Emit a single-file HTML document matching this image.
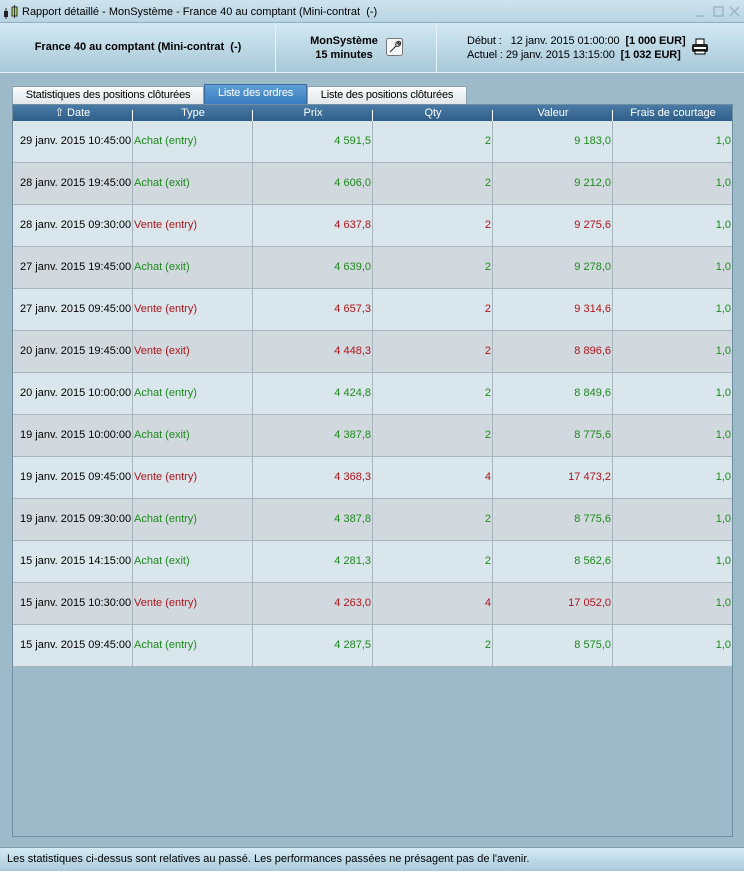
<!DOCTYPE html>
<html><head><meta charset="utf-8"><style>
*{margin:0;padding:0;box-sizing:border-box}
body{width:744px;height:875px;overflow:hidden;background:#9dbac8;font-family:"Liberation Sans",Arial,sans-serif;font-size:11px;color:#000;position:relative}
.abs{position:absolute}
#title{left:0;top:0;width:744px;height:22px;background:linear-gradient(#cfe3ee,#b9d4e2);font-size:11px;line-height:24px;padding-left:22px;white-space:nowrap}
#hdr{left:0;top:22px;width:744px;height:51px;background:linear-gradient(#d3e9f4,#a8c8d7);border-top:1px solid #8fb0c0;border-bottom:1px solid #e4f0f6}
.div{top:0;width:1px;height:50px;background:#8fb0c0;border-right:1px solid #e6f2f8}
.tab{top:86px;height:18px;border:1px solid #8aa3b0;border-bottom:none;background:linear-gradient(#fbfcfd,#e1e7ea);font-size:11px;line-height:17px;text-align:center;letter-spacing:-0.2px;white-space:nowrap}
#box{left:12px;top:104px;width:721px;height:733px;border:1px solid #6f8fa0;background:#9dbac8}
#th{left:0;top:0;width:719px;height:16px;background:linear-gradient(#4a7ba6,#2f5f8a);color:#fff}
#th div{position:absolute;top:0;height:16px;line-height:16px;text-align:center}
.sep{width:1px;height:7px;background:#fff;top:5px !important}
.row{position:absolute;left:0;width:719px;height:42px;border-bottom:1px solid #a7b5bd}
.row div{position:absolute;top:0;height:41px;line-height:41px;border-right:1px solid #a7b5bd;padding:0 1px;white-space:nowrap}
.g{color:#1d8a1d}.r{color:#b0141b}
.ra{text-align:right}
#foot{left:0;top:847px;width:744px;height:24px;background:linear-gradient(#d5eaf4,#a9cadb);border-top:1px solid #7ea2b4;line-height:22px;padding-left:7px;font-size:11px;white-space:nowrap}
#bot{left:0;top:871px;width:744px;height:4px;background:#fff}
</style></head><body>
<div id="title" class="abs">Rapport détaillé - MonSystème - France 40 au comptant (Mini-contrat&nbsp; (-)</div>
<svg class="abs" style="left:3px;top:5px" width="16" height="14"><rect x="1" y="6" width="4" height="6" fill="#222"/><line x1="3" y1="3" x2="3" y2="14" stroke="#222"/><rect x="9" y="2" width="5" height="9" fill="#a6e23a" stroke="#333"/><line x1="11.5" y1="0" x2="11.5" y2="13" stroke="#333"/></svg>
<svg class="abs" style="left:694px;top:5px" width="48" height="14" stroke="#9fb5c2" stroke-width="1.5" fill="none"><line x1="2" y1="11" x2="10" y2="11"/><rect x="20" y="2" width="9" height="9"/><line x1="36" y1="2" x2="45" y2="11"/><line x1="45" y1="2" x2="36" y2="11"/></svg>
<div id="hdr" class="abs">
 <div class="abs div" style="left:275px"></div>
 <div class="abs div" style="left:436px"></div>
 <div class="abs" style="left:0;width:276px;top:18px;text-align:center;font-weight:bold;white-space:nowrap">France 40 au comptant (Mini-contrat&nbsp; (-)</div>
 <div class="abs" style="left:300px;width:88px;top:11px;text-align:center;font-weight:bold;line-height:14px">MonSystème<br>15 minutes</div>
 <svg class="abs" style="left:386px;top:15px" width="18" height="19"><rect x="0.5" y="0.5" width="16" height="17" rx="2" fill="#f4f6f7" stroke="#777"/><path d="M4 14 L10 8 M10 8 C9 5 11 3 13.5 3.5 L11.5 5.5 L12.5 6.5 L14.5 4.5 C15 7 13 9 10 8" stroke="#333" fill="none" stroke-width="1.1"/></svg>
 <div class="abs" style="left:467px;top:11px;line-height:14px;letter-spacing:-0.1px;white-space:nowrap">Début :&nbsp;&nbsp; 12 janv. 2015 01:00:00&nbsp; <b>[1 000 EUR]</b><br>Actuel : 29 janv. 2015 13:15:00&nbsp; <b>[1 032 EUR]</b></div>
 <svg class="abs" style="left:691px;top:15px" width="18" height="18"><rect x="5" y="1" width="8" height="6" fill="#fff" stroke="#000"/><rect x="1" y="6" width="16" height="8" rx="2" fill="#222"/><rect x="3" y="9" width="12" height="2" fill="#fff"/><rect x="4" y="13" width="10" height="3" fill="#fff" stroke="#000"/></svg>
</div>
<div class="abs tab" style="left:12px;width:192px">Statistiques des positions clôturées</div>
<div class="abs tab" style="left:204px;top:84px;height:20px;width:103px;background:linear-gradient(#5f9fd7,#3a7dbf);color:#fff;border-color:#3b6c99">Liste des ordres</div>
<div class="abs tab" style="left:307px;width:160px">Liste des positions clôturées</div>
<div id="box" class="abs">
 <div id="th" class="abs">
  <div style="left:0;width:119px">⇧ Date</div><div class="sep" style="left:119px"></div>
  <div style="left:120px;width:120px">Type</div><div class="sep" style="left:239px"></div>
  <div style="left:240px;width:120px">Prix</div><div class="sep" style="left:359px"></div>
  <div style="left:360px;width:120px">Qty</div><div class="sep" style="left:479px"></div>
  <div style="left:480px;width:120px">Valeur</div><div class="sep" style="left:599px"></div>
  <div style="left:600px;width:120px">Frais de courtage</div>
 </div>
 <div id="rows"></div>
</div>
<div id="foot" class="abs">Les statistiques ci-dessus sont relatives au passé. Les performances passées ne présagent pas de l'avenir.</div>
<div id="bot" class="abs"></div>
<script>
var d=[["29 janv. 2015 10:45:00","Achat (entry)","4 591,5","2","9 183,0"],
["28 janv. 2015 19:45:00","Achat (exit)","4 606,0","2","9 212,0"],
["28 janv. 2015 09:30:00","Vente (entry)","4 637,8","2","9 275,6"],
["27 janv. 2015 19:45:00","Achat (exit)","4 639,0","2","9 278,0"],
["27 janv. 2015 09:45:00","Vente (entry)","4 657,3","2","9 314,6"],
["20 janv. 2015 19:45:00","Vente (exit)","4 448,3","2","8 896,6"],
["20 janv. 2015 10:00:00","Achat (entry)","4 424,8","2","8 849,6"],
["19 janv. 2015 10:00:00","Achat (exit)","4 387,8","2","8 775,6"],
["19 janv. 2015 09:45:00","Vente (entry)","4 368,3","4","17 473,2"],
["19 janv. 2015 09:30:00","Achat (entry)","4 387,8","2","8 775,6"],
["15 janv. 2015 14:15:00","Achat (exit)","4 281,3","2","8 562,6"],
["15 janv. 2015 10:30:00","Vente (entry)","4 263,0","4","17 052,0"],
["15 janv. 2015 09:45:00","Achat (entry)","4 287,5","2","8 575,0"]];
var h="";
d.forEach(function(r,i){var c=r[1][0]=="A"?"g":"r";
h+='<div class="row" style="top:'+(16+i*42)+'px;background:'+(i%2?'#d2d9de':'#d9e6ec')+'">'+
'<div style="left:0;width:120px;padding-left:7px">'+r[0]+'</div>'+
'<div class="'+c+'" style="left:120px;width:120px">'+r[1]+'</div>'+
'<div class="'+c+' ra" style="left:240px;width:120px">'+r[2]+'</div>'+
'<div class="'+c+' ra" style="left:360px;width:120px">'+r[3]+'</div>'+
'<div class="'+c+' ra" style="left:480px;width:120px">'+r[4]+'</div>'+
'<div class="g ra" style="left:600px;width:119px;border-right:none">1,0</div></div>';});
document.getElementById("rows").innerHTML=h;
</script>
</body></html>
